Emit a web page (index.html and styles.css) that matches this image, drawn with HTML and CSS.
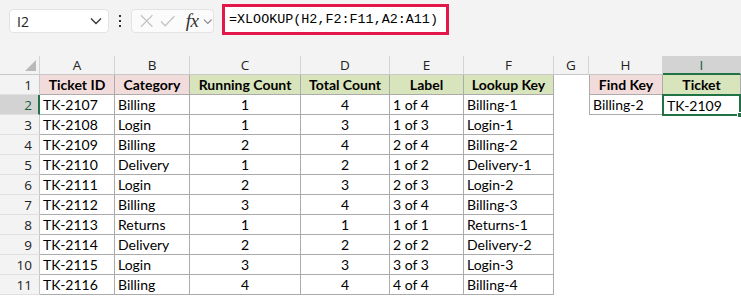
FILE: index.html
```html
<!DOCTYPE html>
<html>
<head>
<meta charset="utf-8">
<link rel="stylesheet" href="styles.css">
</head>
<body>
<div class="toolbar">
  <div class="namebox"><span class="nb-text">I2</span>
    <svg class="chev" width="12" height="8" viewBox="0 0 12 8"><path d="M1 1.5 L6 6.5 L11 1.5" fill="none" stroke="#333" stroke-width="1.3"/></svg>
  </div>
  <div class="dots"><i></i><i></i><i></i></div>
  <div class="fxbox">
    <svg width="14" height="14" viewBox="0 0 14 14"><path d="M1 1 L13 13 M13 1 L1 13" stroke="#c4c4c4" stroke-width="1.3" fill="none"/></svg>
    <svg width="16" height="14" viewBox="0 0 16 14"><path d="M1 7.5 L5.5 12 L15 2" stroke="#c4c4c4" stroke-width="1.3" fill="none"/></svg>
    <span class="fx">fx</span>
    <svg width="10" height="7" viewBox="0 0 10 7"><path d="M1 1.5 L5 5.5 L9 1.5" fill="none" stroke="#888" stroke-width="1.2"/></svg>
  </div>
  <div class="formula">=XLOOKUP(H2,F2:F11,A2:A11)</div>
</div>
<div class="gap"></div>
<div class="sheet">
  <div class="ch corner"><span class="tri"></span></div>
  <div class="ch">A</div><div class="ch">B</div><div class="ch">C</div><div class="ch">D</div><div class="ch">E</div><div class="ch">F</div><div class="ch">G</div><div class="ch">H</div><div class="ch sel">I</div>

  <div class="rh">1</div>
  <div class="c hd pink">Ticket ID</div><div class="c hd pink">Category</div><div class="c hd green">Running Count</div><div class="c hd green">Total Count</div><div class="c hd green">Label</div><div class="c hd green">Lookup Key</div><div class="e"></div><div class="c hd pink lb">Find Key</div><div class="c hd green">Ticket</div>

  <div class="rh sel">2</div>
  <div class="c">TK-2107</div><div class="c">Billing</div><div class="c n">1</div><div class="c n">4</div><div class="c">1 of 4</div><div class="c">Billing-1</div><div class="e"></div><div class="c lb">Billing-2</div><div class="c active">TK-2109<span class="handle"></span></div>

  <div class="rh">3</div>
  <div class="c">TK-2108</div><div class="c">Login</div><div class="c n">1</div><div class="c n">3</div><div class="c">1 of 3</div><div class="c">Login-1</div><div class="e"></div><div class="e"></div><div class="e"></div>

  <div class="rh">4</div>
  <div class="c">TK-2109</div><div class="c">Billing</div><div class="c n">2</div><div class="c n">4</div><div class="c">2 of 4</div><div class="c">Billing-2</div><div class="e"></div><div class="e"></div><div class="e"></div>

  <div class="rh">5</div>
  <div class="c">TK-2110</div><div class="c">Delivery</div><div class="c n">1</div><div class="c n">2</div><div class="c">1 of 2</div><div class="c">Delivery-1</div><div class="e"></div><div class="e"></div><div class="e"></div>

  <div class="rh">6</div>
  <div class="c">TK-2111</div><div class="c">Login</div><div class="c n">2</div><div class="c n">3</div><div class="c">2 of 3</div><div class="c">Login-2</div><div class="e"></div><div class="e"></div><div class="e"></div>

  <div class="rh">7</div>
  <div class="c">TK-2112</div><div class="c">Billing</div><div class="c n">3</div><div class="c n">4</div><div class="c">3 of 4</div><div class="c">Billing-3</div><div class="e"></div><div class="e"></div><div class="e"></div>

  <div class="rh">8</div>
  <div class="c">TK-2113</div><div class="c">Returns</div><div class="c n">1</div><div class="c n">1</div><div class="c">1 of 1</div><div class="c">Returns-1</div><div class="e"></div><div class="e"></div><div class="e"></div>

  <div class="rh">9</div>
  <div class="c">TK-2114</div><div class="c">Delivery</div><div class="c n">2</div><div class="c n">2</div><div class="c">2 of 2</div><div class="c">Delivery-2</div><div class="e"></div><div class="e"></div><div class="e"></div>

  <div class="rh">10</div>
  <div class="c">TK-2115</div><div class="c">Login</div><div class="c n">3</div><div class="c n">3</div><div class="c">3 of 3</div><div class="c">Login-3</div><div class="e"></div><div class="e"></div><div class="e"></div>

  <div class="rh">11</div>
  <div class="c">TK-2116</div><div class="c">Billing</div><div class="c n">4</div><div class="c n">4</div><div class="c">4 of 4</div><div class="c">Billing-4</div><div class="e"></div><div class="e"></div><div class="e"></div>
</div>
</body>
</html>
```
FILE: styles.css
```css
* { box-sizing: border-box; }
html, body { margin: 0; padding: 0; }
body {
  width: 741px;
  height: 297px;
  overflow: hidden;
  background: #fff;
  font-family: Lato, "Liberation Sans", sans-serif;
  color: #000;
}
.toolbar {
  height: 41px;
  background: #f3f3f3;
  display: flex;
  align-items: flex-start;
  padding: 9px 0 0 9px;
  position: relative;
}
.namebox {
  width: 100px;
  height: 24px;
  background: #fff;
  border: 1px solid #e3e3e3;
  border-radius: 4px;
  display: flex;
  align-items: center;
  justify-content: space-between;
  padding: 0 6px 0 7px;
  font-family: "Open Sans", sans-serif;
  font-size: 14px;
  color: #222;
}
.dots {
  width: 22px;
  height: 24px;
  display: flex;
  flex-direction: column;
  align-items: center;
  justify-content: center;
  gap: 3px;
}
.dots i {
  display: block;
  width: 2px;
  height: 2px;
  background: #333;
}
.fxbox {
  width: 83px;
  height: 24px;
  background: #fbfbfb;
  border: 1px solid #e3e3e3;
  border-radius: 4px;
  display: flex;
  align-items: center;
  padding: 0 0 0 8px;
}
.fxbox svg:nth-child(2) { margin-left: 7px; }
.fx {
  font-family: "Liberation Serif", serif;
  font-style: italic;
  font-size: 19px;
  color: #333;
  margin-left: 10px;
  margin-right: 5px;
  letter-spacing: -0.5px;
  line-height: 20px;
}
.formula {
  margin-left: 8px;
  margin-top: -5px;
  width: 227px;
  height: 31px;
  border: 3px solid #e3174a;
  background: #fff;
  font-family: "Liberation Mono", monospace;
  font-size: 13.4px;
  line-height: 25px;
  padding-left: 4px;
  white-space: nowrap;
}
.gap {
  height: 15px;
  background: #f3f3f3;
}
.sheet {
  display: grid;
  grid-template-columns: 40px 75px 75px 111px 89px 74px 90px 35px 74px 78px;
  grid-template-rows: 19px repeat(11, 20px);
  font-size: 14px;
}
.ch {
  background: #f3f3f3;
  border-right: 1px solid #d4d4d4;
  border-bottom: 1px solid #c8c8c8;
  font-family: "Open Sans", sans-serif;
  font-size: 13.5px;
  color: #222;
  text-align: center;
  line-height: 19px;
}
.ch.sel {
  background: #d3d3d3;
  border-bottom: 2px solid #217346;
  color: #185c37;
}
.corner { position: relative; }
.tri {
  position: absolute;
  right: 3px;
  bottom: 3px;
  width: 0;
  height: 0;
  border-left: 11px solid transparent;
  border-bottom: 11px solid #b9b9b9;
}
.rh {
  background: #f3f3f3;
  border-right: 1px solid #c8c8c8;
  border-bottom: 1px solid #e0e0e0;
  font-family: "Open Sans", sans-serif;
  font-size: 13.5px;
  color: #222;
  text-align: right;
  padding-right: 7px;
  line-height: 20px;
}
.rh.sel {
  background: #d3d3d3;
  border-right: 2px solid #217346;
  color: #185c37;
  padding-right: 6px;
}
.c {
  border-right: 1px solid #ababab;
  border-bottom: 1px solid #ababab;
  padding: 0 3px;
  line-height: 20px;
  white-space: nowrap;
  overflow: hidden;
  position: relative;
}
.c.n { text-align: center; }
.c.hd { font-weight: bold; text-align: center; }
.pink { background: #f2dcdb; }
.green { background: #d8e4bc; }
.lb { border-left: 1px solid #ababab; }
.c.active {
  border: 2px solid #217346;
  margin: -1px 0 -1px -1px;
  padding-left: 3px;
  line-height: 19px;
  overflow: visible;
}
.handle {
  position: absolute;
  right: -4px;
  bottom: -4px;
  width: 6px;
  height: 6px;
  background: #217346;
  border: 1px solid #fff;
}
```
